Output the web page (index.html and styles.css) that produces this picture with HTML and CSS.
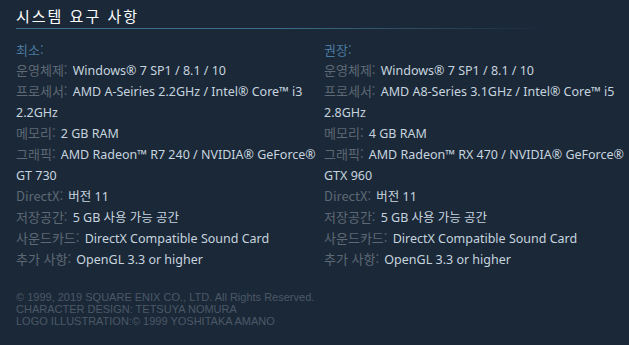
FILE: index.html
```html
<!DOCTYPE html>
<html lang="ko">
<head>
<meta charset="utf-8">
<link rel="stylesheet" href="styles.css">
</head>
<body>
<div class="page">
  <h2 class="title">시스템 요구 사항</h2>
  <div class="reqs">
    <ul class="col">
      <li class="head">최소:</li>
      <li><span class="lbl">운영체제:</span> Windows® 7 SP1 / 8.1 / 10</li>
      <li><span class="lbl">프로세서:</span> AMD A-Seiries 2.2GHz / Intel® Core™ i3 2.2GHz</li>
      <li><span class="lbl">메모리:</span> 2 GB RAM</li>
      <li><span class="lbl">그래픽:</span> AMD Radeon™ R7 240 / NVIDIA® GeForce® GT 730</li>
      <li><span class="lbl">DirectX:</span> 버전 11</li>
      <li><span class="lbl">저장공간:</span> 5 GB 사용 가능 공간</li>
      <li><span class="lbl">사운드카드:</span> DirectX Compatible Sound Card</li>
      <li><span class="lbl">추가 사항:</span> OpenGL 3.3 or higher</li>
    </ul>
    <ul class="col">
      <li class="head">권장:</li>
      <li><span class="lbl">운영체제:</span> Windows® 7 SP1 / 8.1 / 10</li>
      <li><span class="lbl">프로세서:</span> AMD A8-Series 3.1GHz / Intel® Core™ i5 2.8GHz</li>
      <li><span class="lbl">메모리:</span> 4 GB RAM</li>
      <li><span class="lbl">그래픽:</span> AMD Radeon™ RX 470 / NVIDIA® GeForce® GTX 960</li>
      <li><span class="lbl">DirectX:</span> 버전 11</li>
      <li><span class="lbl">저장공간:</span> 5 GB 사용 가능 공간</li>
      <li><span class="lbl">사운드카드:</span> DirectX Compatible Sound Card</li>
      <li><span class="lbl">추가 사항:</span> OpenGL 3.3 or higher</li>
    </ul>
  </div>
  <div class="legal">© 1999, 2019 SQUARE ENIX CO., LTD. All Rights Reserved.<br>CHARACTER DESIGN: TETSUYA NOMURA<br>LOGO ILLUSTRATION:© 1999 YOSHITAKA AMANO</div>
</div>
</body>
</html>
```
FILE: styles.css
```css
html, body {
  margin: 0;
  padding: 0;
  background: #1b2838;
}
.page {
  padding: 0 2px 0 16px;
  font-family: "Noto Sans", "Noto Sans CJK KR", sans-serif;
}
.title {
  margin: 0;
  padding-top: 6px;
  height: 22px;
  font-size: 15px;
  font-weight: normal;
  letter-spacing: 2px;
  line-height: 20px;
  color: #ffffff;
  font-family: "Noto Sans CJK KR", sans-serif;
  border-bottom: 1px solid transparent;
  border-image: linear-gradient(to right, #3b6e8c 0%, #3b6e8c 50%, rgba(59,110,140,0) 100%) 1;
  width: 530px;
}
.reqs {
  display: grid;
  grid-template-columns: 304px 1fr;
  column-gap: 4px;
  margin-top: 11px;
}
.col {
  list-style: none;
  margin: 0;
  padding: 0;
}
.col li {
  font-size: 12.5px;
  line-height: 21px;
  color: #c6d4df;
  font-family: "Noto Sans", "Noto Sans CJK KR", sans-serif;
}
.col li.head {
  color: #4a7ba0;
  font-family: "Noto Sans CJK KR", sans-serif;
  font-size: 13px;
  line-height: 20px;
  height: 20px;
}
.lbl {
  color: #5d6974;
  font-family: "Noto Sans CJK KR", sans-serif;
  font-size: 13px;
  line-height: 1;
  margin-right: 2px;
}
.legal {
  margin-top: 21px;
  font-family: "Liberation Sans", Arial, sans-serif;
  font-size: 11px;
  line-height: 12px;
  color: #4b5866;
}
```
